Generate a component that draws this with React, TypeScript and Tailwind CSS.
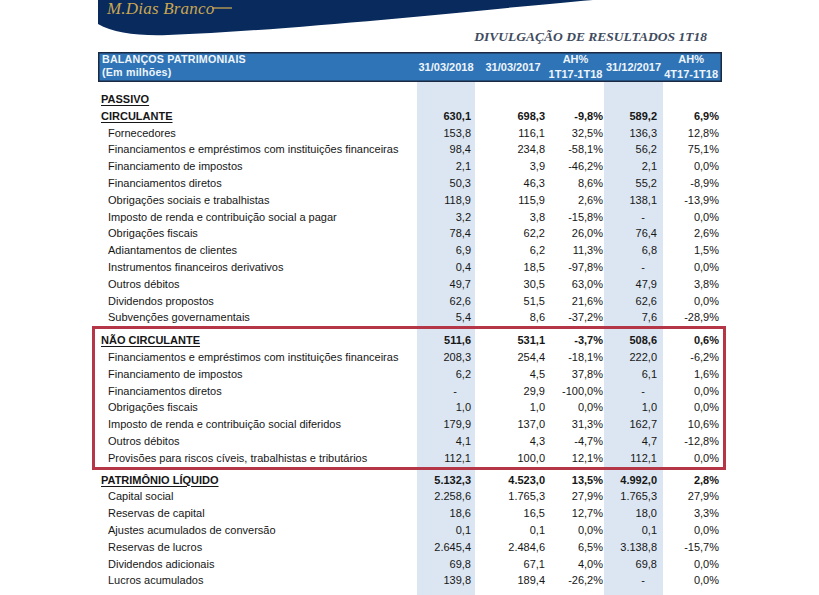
type Row = { label: string; v?: string[]; kind: 'title' | 'head' | 'item' };

const circulante: Row[] = [
  { label: 'PASSIVO', kind: 'title' },
  { label: 'CIRCULANTE', kind: 'head', v: ['630,1', '698,3', '-9,8%', '589,2', '6,9%'] },
  { label: 'Fornecedores', kind: 'item', v: ['153,8', '116,1', '32,5%', '136,3', '12,8%'] },
  { label: 'Financiamentos e empréstimos com instituições financeiras', kind: 'item', v: ['98,4', '234,8', '-58,1%', '56,2', '75,1%'] },
  { label: 'Financiamento de impostos', kind: 'item', v: ['2,1', '3,9', '-46,2%', '2,1', '0,0%'] },
  { label: 'Financiamentos diretos', kind: 'item', v: ['50,3', '46,3', '8,6%', '55,2', '-8,9%'] },
  { label: 'Obrigações sociais e trabalhistas', kind: 'item', v: ['118,9', '115,9', '2,6%', '138,1', '-13,9%'] },
  { label: 'Imposto de renda e contribuição social a pagar', kind: 'item', v: ['3,2', '3,8', '-15,8%', '-', '0,0%'] },
  { label: 'Obrigações fiscais', kind: 'item', v: ['78,4', '62,2', '26,0%', '76,4', '2,6%'] },
  { label: 'Adiantamentos de clientes', kind: 'item', v: ['6,9', '6,2', '11,3%', '6,8', '1,5%'] },
  { label: 'Instrumentos financeiros derivativos', kind: 'item', v: ['0,4', '18,5', '-97,8%', '-', '0,0%'] },
  { label: 'Outros débitos', kind: 'item', v: ['49,7', '30,5', '63,0%', '47,9', '3,8%'] },
  { label: 'Dividendos propostos', kind: 'item', v: ['62,6', '51,5', '21,6%', '62,6', '0,0%'] },
  { label: 'Subvenções governamentais', kind: 'item', v: ['5,4', '8,6', '-37,2%', '7,6', '-28,9%'] },
];

const naoCirculante: Row[] = [
  { label: 'NÃO CIRCULANTE', kind: 'head', v: ['511,6', '531,1', '-3,7%', '508,6', '0,6%'] },
  { label: 'Financiamentos e empréstimos com instituições financeiras', kind: 'item', v: ['208,3', '254,4', '-18,1%', '222,0', '-6,2%'] },
  { label: 'Financiamento de impostos', kind: 'item', v: ['6,2', '4,5', '37,8%', '6,1', '1,6%'] },
  { label: 'Financiamentos diretos', kind: 'item', v: ['-', '29,9', '-100,0%', '-', '0,0%'] },
  { label: 'Obrigações fiscais', kind: 'item', v: ['1,0', '1,0', '0,0%', '1,0', '0,0%'] },
  { label: 'Imposto de renda e contribuição social diferidos', kind: 'item', v: ['179,9', '137,0', '31,3%', '162,7', '10,6%'] },
  { label: 'Outros débitos', kind: 'item', v: ['4,1', '4,3', '-4,7%', '4,7', '-12,8%'] },
  { label: 'Provisões para riscos cíveis, trabalhistas e tributários', kind: 'item', v: ['112,1', '100,0', '12,1%', '112,1', '0,0%'] },
];

const patrimonio: Row[] = [
  { label: 'PATRIMÔNIO LÍQUIDO', kind: 'head', v: ['5.132,3', '4.523,0', '13,5%', '4.992,0', '2,8%'] },
  { label: 'Capital social', kind: 'item', v: ['2.258,6', '1.765,3', '27,9%', '1.765,3', '27,9%'] },
  { label: 'Reservas de capital', kind: 'item', v: ['18,6', '16,5', '12,7%', '18,0', '3,3%'] },
  { label: 'Ajustes acumulados de conversão', kind: 'item', v: ['0,1', '0,1', '0,0%', '0,1', '0,0%'] },
  { label: 'Reservas de lucros', kind: 'item', v: ['2.645,4', '2.484,6', '6,5%', '3.138,8', '-15,7%'] },
  { label: 'Dividendos adicionais', kind: 'item', v: ['69,8', '67,1', '4,0%', '69,8', '0,0%'] },
  { label: 'Lucros acumulados', kind: 'item', v: ['139,8', '189,4', '-26,2%', '-', '0,0%'] },
];

// right padding per value column, a dash sits further left (accounting format)
const pad = ['pr-[4px]', 'pr-0', 'pr-[1px]', 'pr-[6px]', 'pr-[3px]'];

function TableRow({ row }: { row: Row }) {
  const strong = row.kind !== 'item';
  return (
    <div className="grid grid-cols-[319px_58px_70px_59px_59px_59px] h-[16.8px] leading-[16.8px]">
      <div
        className={
          strong
            ? 'pl-[3px] font-bold underline underline-offset-[1.5px] whitespace-nowrap'
            : 'pl-[10px] whitespace-nowrap'
        }
      >
        {row.label}
      </div>
      {(row.v ?? ['', '', '', '', '']).map((val, i) => (
        <div
          key={i}
          className={`text-right whitespace-nowrap ${strong ? 'font-bold' : ''} ${val === '-' ? 'pr-[18px]' : pad[i]}`}
        >
          {val}
        </div>
      ))}
    </div>
  );
}

function Banner() {
  return (
    <div className="relative flex flex-col h-[52px]">
      <svg className="absolute left-0 top-0" width="520" height="37" viewBox="0 0 520 37">
        <path d="M0 0 H495 C380 10 200 30 70 35 C40 36 15 33 0 24 Z" fill="#082a5c" />
        <path d="M114 8 H134" stroke="#c9a652" strokeWidth="1.3" />
      </svg>
      <div className="relative flex flex-col h-[29px] pl-[9px]">
        <div className="font-['Liberation_Serif',serif] italic text-[17px] leading-[18px] text-[#c9a652] tracking-[0.2px]">
          M.Dias Branco
        </div>
      </div>
      <div className="relative flex justify-end pr-[15px] h-[16px] leading-[16px] font-['Liberation_Serif',serif] font-bold italic text-[13.5px] text-[#3f4c60]">
        DIVULGAÇÃO DE RESULTADOS 1T18
      </div>
    </div>
  );
}

export default function App() {
  return (
    <div className="w-[819px] h-[595px] overflow-hidden bg-white text-[#161616] font-['Liberation_Sans',Arial,sans-serif] text-[11px]">
      <div className="ml-[98px] w-[624px]">
        <Banner />

        <div className="grid grid-cols-[319px_58px_70px_59px_59px_59px] h-[30px] bg-[#2f74b6] shadow-[inset_0_0_0_1.5px_#1b2a44] text-[#eef4fb] font-bold leading-[13px] whitespace-nowrap">
          <div className="pl-[4px] pt-[1px] text-[10.7px] tracking-[0.2px]">
            <div>BALANÇOS PATRIMONIAIS</div>
            <div>(Em milhões)</div>
          </div>
          <div className="flex items-center justify-center">31/03/2018</div>
          <div className="flex items-center justify-center pl-[6px]">31/03/2017</div>
          <div className="flex flex-col items-center justify-center leading-[15px] pl-[2px]">
            <span>AH%</span>
            <span>1T17-1T18</span>
          </div>
          <div className="flex items-center justify-center">31/12/2017</div>
          <div className="flex items-center justify-end pr-[4px]">
            <div className="flex flex-col items-center leading-[15px]">
              <span>AH%</span>
              <span>4T17-1T18</span>
            </div>
          </div>
        </div>

        <div className="pt-[9px] pb-[12px] bg-[linear-gradient(to_right,transparent_319px,#dce6f2_319px,#dce6f2_377px,transparent_377px,transparent_506px,#dce6f2_506px,#dce6f2_565px,transparent_565px)]">
          {circulante.map((r, i) => (
            <TableRow key={i} row={r} />
          ))}

          <div className="ml-[-6px] mr-[-4px] border-[3px] border-[#b53647] pl-[3px] pr-[1px] pt-[3px]">
            {naoCirculante.map((r, i) => (
              <TableRow key={i} row={r} />
            ))}
          </div>

          <div className="mt-[2px]">
            {patrimonio.map((r, i) => (
              <TableRow key={i} row={r} />
            ))}
          </div>
        </div>
      </div>
    </div>
  );
}
